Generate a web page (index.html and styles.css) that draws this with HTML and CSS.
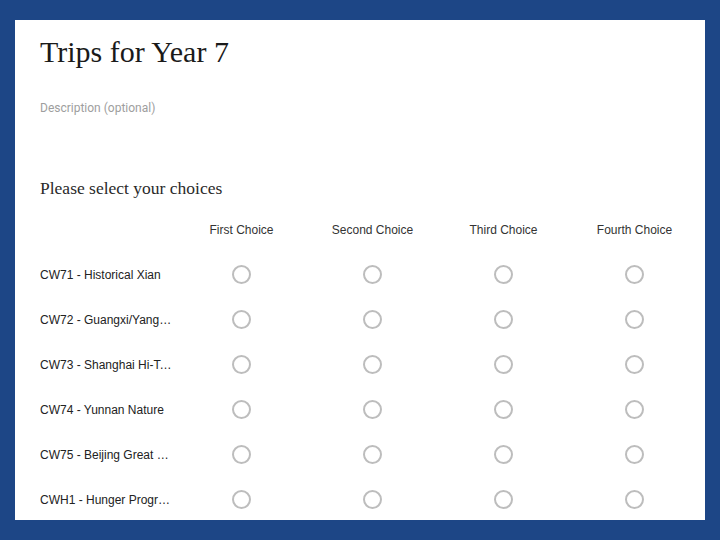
FILE: index.html
```html
<!DOCTYPE html>
<html>
<head>
<meta charset="utf-8">
<link rel="stylesheet" href="styles.css">
</head>
<body>
<div class="panel">
  <h1 class="title">Trips for Year 7</h1>
  <div class="desc">Description (optional)</div>
  <h2 class="question">Please select your choices</h2>
  <div class="grid">
    <div class="head-row">
      <div class="label"></div>
      <div class="col">First Choice</div>
      <div class="col">Second Choice</div>
      <div class="col">Third Choice</div>
      <div class="col">Fourth Choice</div>
    </div>
    <div class="row">
      <div class="label">CW71 - Historical Xian</div>
      <div class="col"><span class="radio"></span></div>
      <div class="col"><span class="radio"></span></div>
      <div class="col"><span class="radio"></span></div>
      <div class="col"><span class="radio"></span></div>
    </div>
    <div class="row">
      <div class="label">CW72 - Guangxi/Yangshuo Adventure</div>
      <div class="col"><span class="radio"></span></div>
      <div class="col"><span class="radio"></span></div>
      <div class="col"><span class="radio"></span></div>
      <div class="col"><span class="radio"></span></div>
    </div>
    <div class="row">
      <div class="label">CW73 - Shanghai Hi-Tech Trip</div>
      <div class="col"><span class="radio"></span></div>
      <div class="col"><span class="radio"></span></div>
      <div class="col"><span class="radio"></span></div>
      <div class="col"><span class="radio"></span></div>
    </div>
    <div class="row">
      <div class="label">CW74 - Yunnan Nature</div>
      <div class="col"><span class="radio"></span></div>
      <div class="col"><span class="radio"></span></div>
      <div class="col"><span class="radio"></span></div>
      <div class="col"><span class="radio"></span></div>
    </div>
    <div class="row">
      <div class="label">CW75 - Beijing Great Wall Trek</div>
      <div class="col"><span class="radio"></span></div>
      <div class="col"><span class="radio"></span></div>
      <div class="col"><span class="radio"></span></div>
      <div class="col"><span class="radio"></span></div>
    </div>
    <div class="row">
      <div class="label">CWH1 - Hunger Program Service</div>
      <div class="col"><span class="radio"></span></div>
      <div class="col"><span class="radio"></span></div>
      <div class="col"><span class="radio"></span></div>
      <div class="col"><span class="radio"></span></div>
    </div>
  </div>
</div>
</body>
</html>
```
FILE: styles.css
```css
html, body {
  margin: 0;
  padding: 0;
  background: #1d4686;
}
body {
  padding: 20px 15px;
  width: 690px;
  height: 500px;
}
.panel {
  background: #ffffff;
  width: 665px;
  height: 500px;
  padding-left: 25px;
  overflow: hidden;
  font-family: "Liberation Sans", Arial, sans-serif;
  color: #202124;
}
.title {
  margin: 0;
  padding-top: 14px;
  font-family: "Liberation Serif", serif;
  font-weight: normal;
  font-size: 30px;
  line-height: 36px;
  color: #1a1a1a;
}
.desc {
  margin-top: 30px;
  font-family: Roboto, sans-serif;
  font-size: 12px;
  line-height: 16px;
  color: #9e9e9e;
}
.question {
  margin: 61px 0 0 0;
  font-family: "Liberation Serif", serif;
  font-weight: normal;
  font-size: 17.5px;
  line-height: 22px;
  color: #2a2a2a;
}
.grid {
  margin-top: 19px;
}
.head-row, .row {
  display: grid;
  grid-template-columns: 136px 131px 131px 131px 131px;
  align-items: center;
}
.head-row {
  height: 24px;
  font-size: 12px;
  color: #333;
}
.row {
  height: 45px;
  font-size: 12px;
}
.head-row + .row {
  margin-top: 10px;
}
.label {
  white-space: nowrap;
  overflow: hidden;
  text-overflow: ellipsis;
  padding-right: 4px;
  color: #222;
}
.col {
  display: flex;
  justify-content: center;
  align-items: center;
  text-align: center;
}
.radio {
  display: block;
  width: 15px;
  height: 15px;
  border: 2px solid #bdbdbd;
  border-radius: 50%;
}
```
